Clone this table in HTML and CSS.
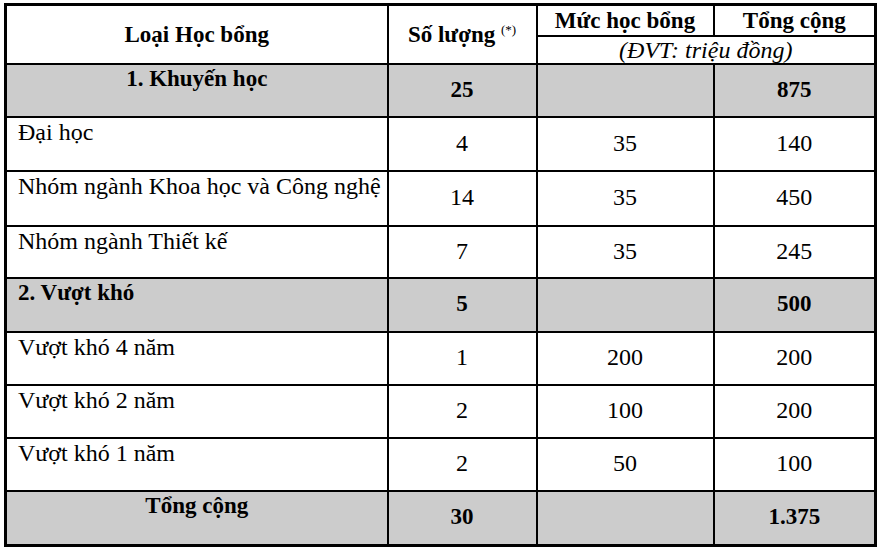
FILE: index.html
```html
<!DOCTYPE html>
<html lang="vi">
<head>
<meta charset="utf-8">
<title>Học bổng</title>
<link rel="stylesheet" href="styles.css">
</head>
<body>
<div class="page">
<table class="grid">
  <colgroup>
    <col class="c1"><col class="c2"><col class="c3"><col class="c4">
  </colgroup>
  <thead>
    <tr class="h1">
      <th rowspan="2" class="hd">Loại Học bổng</th>
      <th rowspan="2" class="hd">Số lượng <sup>(*)</sup></th>
      <th class="hd">Mức học bổng</th>
      <th class="hd">Tổng cộng</th>
    </tr>
    <tr class="h2">
      <td colspan="2" class="unit">(ĐVT: triệu đồng)</td>
    </tr>
  </thead>
  <tbody>
    <tr class="grp r1">
      <td class="lbl center b">1. Khuyến học</td>
      <td class="num b">25</td>
      <td class="num"></td>
      <td class="num b">875</td>
    </tr>
    <tr class="r2">
      <td class="lbl">Đại học</td>
      <td class="num">4</td>
      <td class="num">35</td>
      <td class="num">140</td>
    </tr>
    <tr class="r3">
      <td class="lbl">Nhóm ngành Khoa học và Công nghệ</td>
      <td class="num">14</td>
      <td class="num">35</td>
      <td class="num">450</td>
    </tr>
    <tr class="r4">
      <td class="lbl">Nhóm ngành Thiết kế</td>
      <td class="num">7</td>
      <td class="num">35</td>
      <td class="num">245</td>
    </tr>
    <tr class="grp r5">
      <td class="lbl b">2. Vượt khó</td>
      <td class="num b">5</td>
      <td class="num"></td>
      <td class="num b">500</td>
    </tr>
    <tr class="r6">
      <td class="lbl">Vượt khó 4 năm</td>
      <td class="num">1</td>
      <td class="num">200</td>
      <td class="num">200</td>
    </tr>
    <tr class="r7">
      <td class="lbl">Vượt khó 2 năm</td>
      <td class="num">2</td>
      <td class="num">100</td>
      <td class="num">200</td>
    </tr>
    <tr class="r8">
      <td class="lbl">Vượt khó 1 năm</td>
      <td class="num">2</td>
      <td class="num">50</td>
      <td class="num">100</td>
    </tr>
    <tr class="grp r9">
      <td class="lbl center b">Tổng cộng</td>
      <td class="num b">30</td>
      <td class="num"></td>
      <td class="num b">1.375</td>
    </tr>
  </tbody>
</table>
</div>
</body>
</html>
```

FILE: styles.css
```css
html, body {
  margin: 0;
  padding: 0;
  background: #ffffff;
}

.page {
  padding: 3px 0 0 4px;
}

.grid {
  border-collapse: collapse;
  table-layout: fixed;
  width: 872px;
  border: 3px solid #000;
  font-family: "Liberation Serif", "Times New Roman", serif;
  font-size: 24px;
  color: #000;
}

.c1 { width: 382px; }
.c2 { width: 149px; }
.c3 { width: 177px; }
.c4 { width: 162px; }

.grid th,
.grid td {
  border: 2px solid #000;
  padding: 0;
  line-height: 1;
}

.hd {
  font-weight: bold;
  font-size: 23px;
  text-align: center;
  vertical-align: middle;
}

.hd sup {
  font-weight: normal;
  font-size: 13px;
  vertical-align: 8px;
}

.h1 { height: 31px; }
.h2 { height: 28px; }

.unit {
  font-style: italic;
  text-align: center;
  vertical-align: middle;
}

.grp td {
  background: #cccccc;
}

.lbl {
  text-align: left;
  vertical-align: top;
  padding: 2px 0 0 11px !important;
}

.lbl.center {
  text-align: center;
  padding-left: 0 !important;
}

.num {
  text-align: center;
  vertical-align: middle;
  padding: 0 0 2px 0 !important;
}

.b { font-weight: bold; font-size: 23px; }

.r1 { height: 53px; }
.r2 { height: 54px; }
.r3 { height: 55px; }
.r4 { height: 52px; }
.r5 { height: 54px; }
.r6 { height: 53px; }
.r7 { height: 53px; }
.r8 { height: 53px; }
.r9 { height: 55px; }
```
